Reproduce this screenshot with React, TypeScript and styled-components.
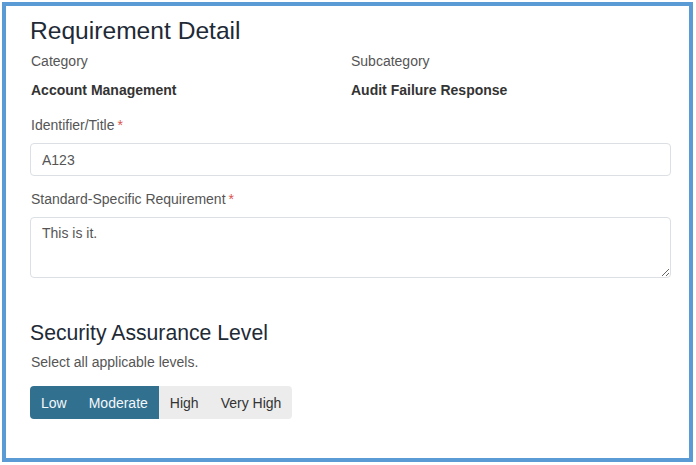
import React from "react";
import styled, { createGlobalStyle } from "styled-components";

const Global = createGlobalStyle`
  html, body { margin: 0; padding: 0; background: #ffffff; }
  body { font-family: "Liberation Sans", Arial, sans-serif; font-size: 14px; color: #333; }
  * { box-sizing: border-box; }
`;

const Frame = styled.div`
  margin: 2px;
  width: 691px;
  height: 460px;
  border: 4px solid #5b9bd5;
  background: #fff;
  padding: 11px 18px 0 24px;
  display: flex;
  flex-direction: column;
`;

const Title = styled.h3`
  margin: 0;
  font-size: 24.6px;
  font-weight: 400;
  line-height: 27px;
  color: #1e2a36;
`;

const SubTitle = styled.h4`
  margin: 43px 0 0;
  font-size: 21.2px;
  font-weight: 400;
  line-height: 23px;
  color: #1e2a36;
`;

const InfoGrid = styled.div`
  display: grid;
  grid-template-columns: 320px 1fr;
  margin-top: 7px;
`;

const InfoCell = styled.div`
  display: flex;
  flex-direction: column;
  gap: 9px;
  padding-left: 1px;
`;

const InfoLabel = styled.div`
  line-height: 20px;
  color: #555;
`;

const InfoValue = styled.div`
  line-height: 20px;
  font-weight: 700;
  color: #333;
`;

const Field = styled.div<{ $top: number }>`
  display: flex;
  flex-direction: column;
  margin-top: ${(p) => p.$top}px;
`;

const Label = styled.label`
  line-height: 20px;
  color: #555;
  margin: 0 0 8px 1px;
`;

const Req = styled.span`
  color: #d9534f;
  margin-left: 3px;
`;

const TextInput = styled.input`
  width: 641px;
  height: 33px;
  padding: 0 11px;
  border: 1px solid #dcdfe3;
  border-radius: 4px;
  font-family: "Liberation Sans", Arial, sans-serif;
  font-size: 14px;
  color: #555;
  background: #fff;
  outline: none;
`;

const TextArea = styled.textarea`
  width: 641px;
  height: 61px;
  padding: 5px 11px;
  border: 1px solid #dcdfe3;
  border-radius: 4px;
  font-family: "Liberation Sans", Arial, sans-serif;
  font-size: 14px;
  line-height: 20px;
  color: #555;
  background: #fff;
  resize: vertical;
  outline: none;
`;

const Hint = styled.p`
  margin: 8px 0 0 1px;
  line-height: 20px;
  color: #555;
`;

const Group = styled.div`
  display: flex;
  margin-top: 14px;
  align-self: flex-start;
  border-radius: 4px;
  overflow: hidden;
`;

const LevelButton = styled.button<{ $active: boolean }>`
  height: 33px;
  padding: 0 11px;
  border: none;
  font-family: "Liberation Sans", Arial, sans-serif;
  font-size: 14px;
  background: ${(p) => (p.$active ? "#31708f" : "#ececec")};
  color: ${(p) => (p.$active ? "#f4f8fb" : "#333")};
  cursor: pointer;
`;

const levels = [
  { name: "Low", active: true },
  { name: "Moderate", active: true },
  { name: "High", active: false },
  { name: "Very High", active: false },
];

export default function App() {
  return (
    <>
      <Global />
      <Frame>
        <Title>Requirement Detail</Title>
        <InfoGrid>
          <InfoCell>
            <InfoLabel>Category</InfoLabel>
            <InfoValue>Account Management</InfoValue>
          </InfoCell>
          <InfoCell>
            <InfoLabel>Subcategory</InfoLabel>
            <InfoValue>Audit Failure Response</InfoValue>
          </InfoCell>
        </InfoGrid>
        <Field $top={15}>
          <Label>
            Identifier/Title<Req>*</Req>
          </Label>
          <TextInput defaultValue="A123" />
        </Field>
        <Field $top={13}>
          <Label>
            Standard-Specific Requirement<Req>*</Req>
          </Label>
          <TextArea defaultValue="This is it." />
        </Field>
        <SubTitle>Security Assurance Level</SubTitle>
        <Hint>Select all applicable levels.</Hint>
        <Group>
          {levels.map((l) => (
            <LevelButton key={l.name} $active={l.active}>
              {l.name}
            </LevelButton>
          ))}
        </Group>
      </Frame>
    </>
  );
}
